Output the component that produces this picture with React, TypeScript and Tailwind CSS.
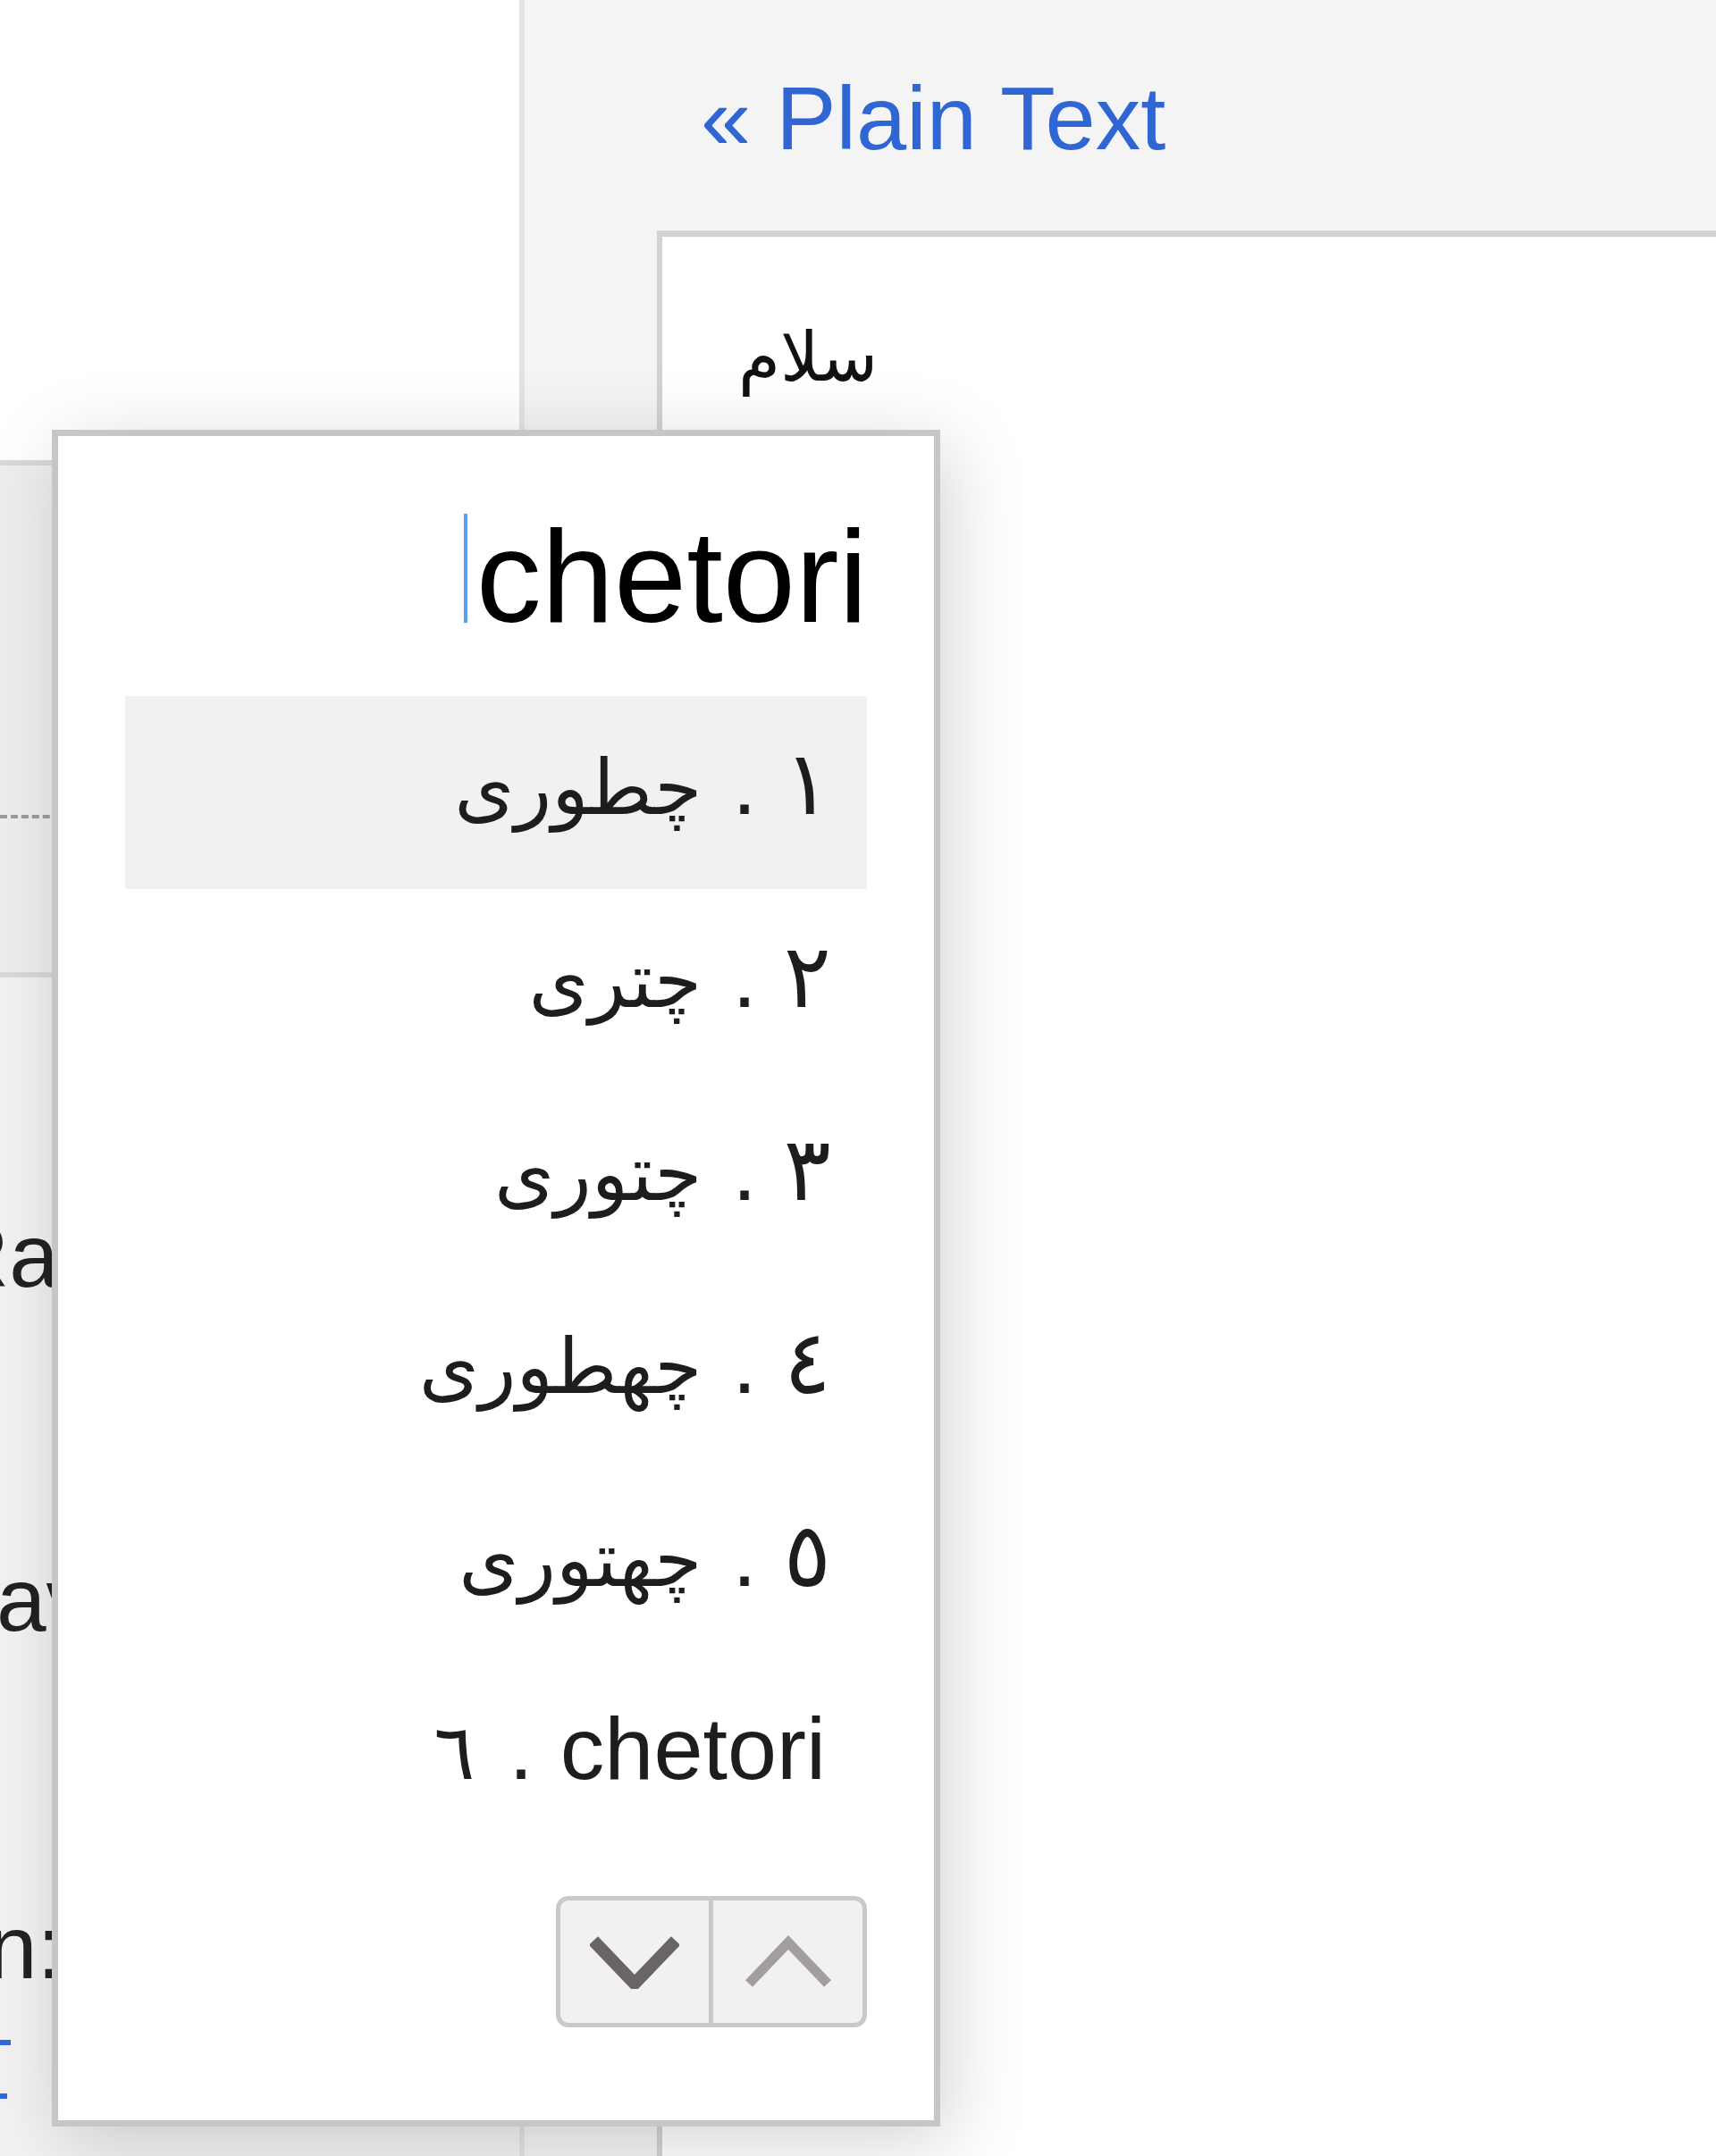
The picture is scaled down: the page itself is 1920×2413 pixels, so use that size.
const suggestions = [
  { n: "١", word: "چطوری" },
  { n: "٢", word: "چتری" },
  { n: "٣", word: "چتوری" },
  { n: "٤", word: "چهطوری" },
  { n: "٥", word: "چهتوری" },
];

function Chevron({ up, color }: { up?: boolean; color: string }) {
  return (
    <svg width="100" height="60" viewBox="0 0 100 60" fill="none">
      <polyline
        points={up ? "6,54 50,8 94,54" : "4,6 50,54 96,6"}
        stroke={color}
        strokeWidth={up ? 11 : 14}
        strokeLinejoin="miter"
      />
    </svg>
  );
}

function SuggestionPopup() {
  return (
    <div className="absolute left-[58px] top-[481px] w-[994px] h-[1899px] bg-white border-[7px] border-[#c6c6c6] shadow-[12px_18px_80px_rgba(0,0,0,0.17)] px-[75px] pt-[85px] flex flex-col">
      <div className="flex justify-end items-center -mr-[1px] h-[146px]">
        <span className="w-[4px] h-[122px] bg-[#5a9cf2] mr-[10px] mt-[-20px]" />
        <span className="text-[146px] leading-none text-black">chetori</span>
      </div>

      <div className="mt-[60px] flex flex-col">
        {suggestions.map((s, i) => (
          <div
            key={s.n}
            className={
              "h-[216px] pt-[48px] pr-[40px] flex justify-end items-baseline gap-[30px] text-[99px] leading-none text-[#1d1d1d] " +
              (i === 0 ? "bg-[#f1f1f1]" : "")
            }
          >
            <span dir="rtl" className="text-[86px] mr-[4px]">{s.word}</span>
            <span>.</span>
            <span>{s.n}</span>
          </div>
        ))}
        <div className="h-[216px] pt-[48px] pr-[40px] flex justify-end items-baseline gap-[30px] text-[99px] leading-none text-[#1d1d1d]">
          <span className="text-[86px] mr-[8px]">٦</span>
          <span>.</span>
          <span className="mr-[6px]">chetori</span>
        </div>
      </div>

      <div className="mt-[47px] flex justify-end">
        <div className="flex">
          <button className="w-[176px] h-[147px] bg-[#f1f1f1] border-[5px] border-[#c9c9c9] rounded-l-[14px] flex items-center justify-center">
            <Chevron color="#6b6467" />
          </button>
          <button className="w-[172px] h-[147px] bg-[#f1f1f1] border-[5px] border-l-0 border-[#c9c9c9] rounded-r-[14px] flex items-center justify-center">
            <Chevron up color="#a39da0" />
          </button>
        </div>
      </div>
    </div>
  );
}

export default function App() {
  return (
    <div className="relative w-[1920px] h-[2413px] overflow-hidden flex bg-white font-['Liberation_Sans','DejaVu_Sans',sans-serif]">
      {/* left column, mostly hidden behind the popup */}
      <aside className="w-[581px] shrink-0 flex flex-col overflow-hidden">
        <div className="h-[515px] bg-white" />
        <div className="h-[397px] bg-[#eeeeee] border-t-[6px] border-[#d8d8d8]" />
        <div className="h-[176px] bg-[#eeeeee] border-t-[4px] border-dashed border-[#9c9c9c]" />
        <div className="flex-1 bg-[#f2f2f2] border-t-[6px] border-[#dadada] flex flex-col text-[100px] leading-none text-[#222]">
          <div className="mt-[261px] h-[100px] ml-[-62px] whitespace-nowrap">Rating</div>
          <div className="mt-[285px] h-[100px] ml-[-4px] whitespace-nowrap">avail</div>
          <div className="mt-[289px] h-[100px] ml-[-14px] whitespace-nowrap">n:</div>
          <div className="mt-[54px] h-[6px] w-[12px] bg-[#3366dd]" />
          <div className="mt-[54px] h-[6px] w-[8px] bg-[#3366dd]" />
        </div>
      </aside>

      {/* right panel */}
      <main className="flex-1 bg-[#f4f4f4] border-l-[6px] border-[#e3e3e3] flex flex-col">
        <a className="mt-[82px] ml-[197px] text-[101px] leading-none text-[#2f66d4] whitespace-nowrap">
          « Plain Text
        </a>
        <div className="mt-[75px] ml-[148px] flex-1 bg-white border-t-[7px] border-l-[6px] border-[#d2d2d2] pl-[85px] pt-[97px]">
          <div className="text-[76px] leading-none text-[#111]">سلام</div>
        </div>
      </main>

      <SuggestionPopup />
    </div>
  );
}
